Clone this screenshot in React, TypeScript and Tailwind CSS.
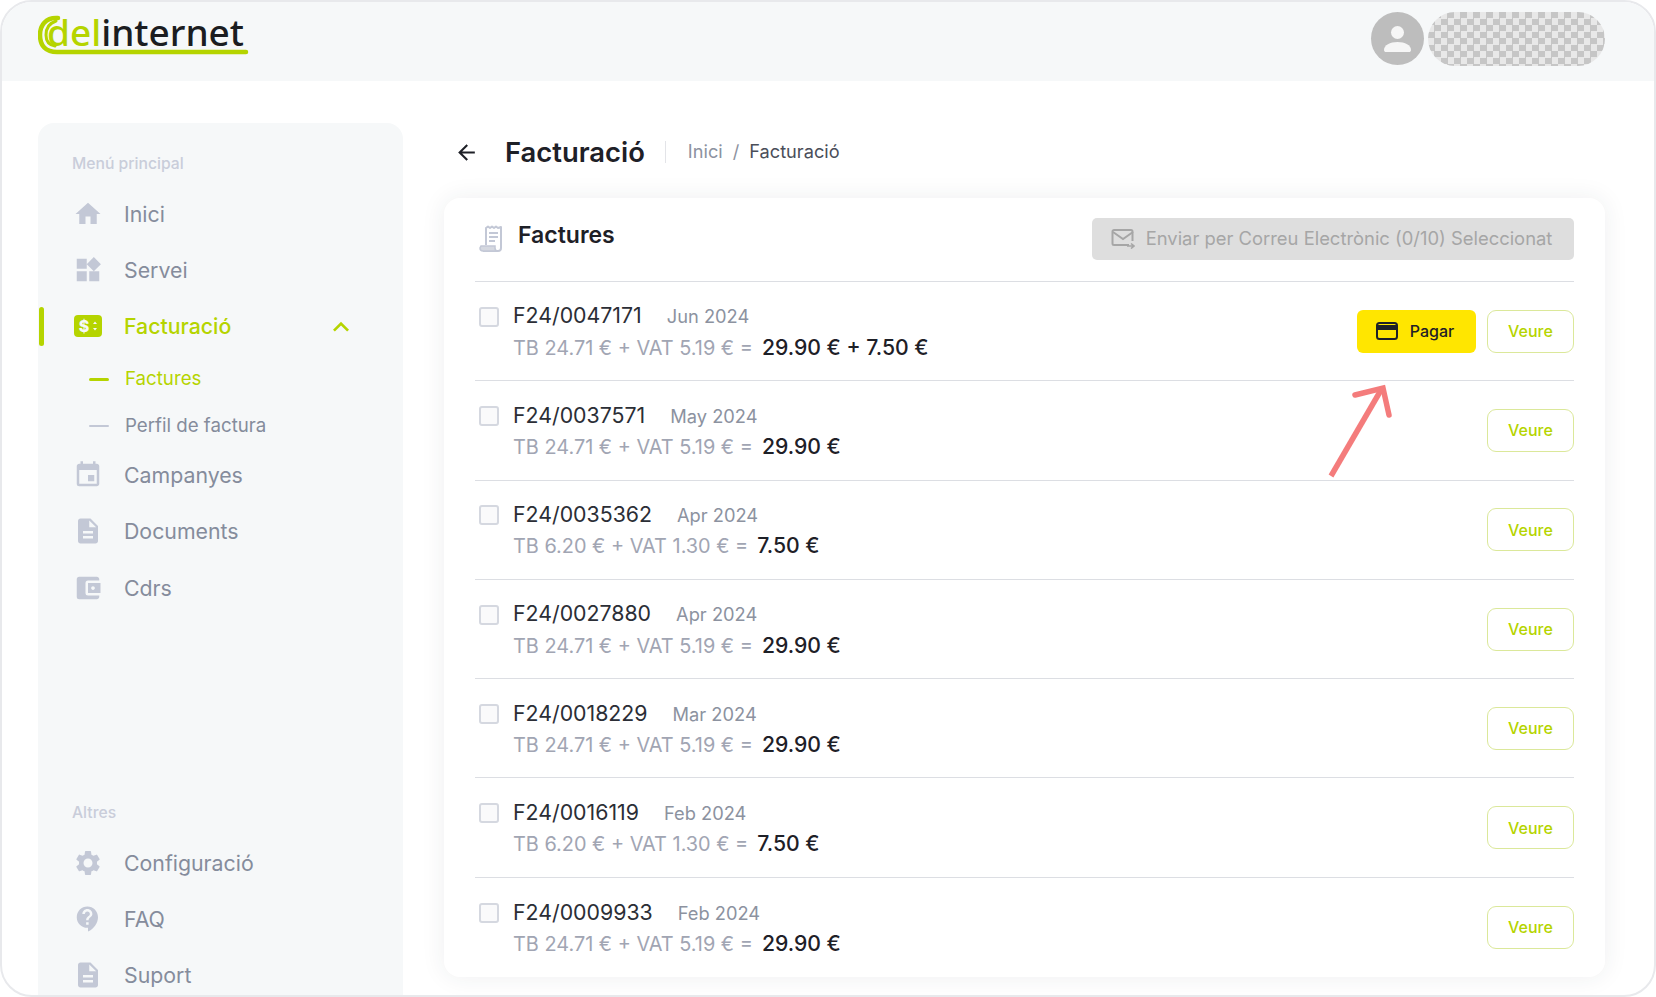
import React from 'react';
import { MdHome, MdWidgets, MdEvent, MdDescription, MdAccountBalanceWallet, MdSettings, MdContactSupport, MdKeyboardArrowUp, MdArrowBack } from 'react-icons/md';

const INVOICES = [
  { id: 'F24/0047171', date: 'Jun 2024', base: 'TB 24.71 € + VAT 5.19 € =', total: '29.90 € + 7.50 €', pay: true },
  { id: 'F24/0037571', date: 'May 2024', base: 'TB 24.71 € + VAT 5.19 € =', total: '29.90 €', pay: false },
  { id: 'F24/0035362', date: 'Apr 2024', base: 'TB 6.20 € + VAT 1.30 € =', total: '7.50 €', pay: false },
  { id: 'F24/0027880', date: 'Apr 2024', base: 'TB 24.71 € + VAT 5.19 € =', total: '29.90 €', pay: false },
  { id: 'F24/0018229', date: 'Mar 2024', base: 'TB 24.71 € + VAT 5.19 € =', total: '29.90 €', pay: false },
  { id: 'F24/0016119', date: 'Feb 2024', base: 'TB 6.20 € + VAT 1.30 € =', total: '7.50 €', pay: false },
  { id: 'F24/0009933', date: 'Feb 2024', base: 'TB 24.71 € + VAT 5.19 € =', total: '29.90 €', pay: false },
];

function Logo() {
  return (
    <div className="relative w-[212px] h-[44px]">
      <svg className="absolute left-0 top-0" width="212" height="44" viewBox="0 0 212 44" fill="none">
        <path d="M20 3H18C8 3 2 10 2 20C2 31 8 37 19 37H208" stroke="#b5d400" strokeWidth="4.5" strokeLinecap="round" />
        <path d="M18 6C12 8 8 13 8 20C8 26 11 30 17 31" stroke="#b5d400" strokeWidth="3" strokeLinecap="round" />
      </svg>
      <span className="absolute left-[9px] top-[-8px] text-[37px] leading-[50px] font-medium whitespace-nowrap font-['Noto_Sans',sans-serif]">
        <span className="text-[#b5d400]">del</span>
        <span className="text-[#1b1d21]">internet</span>
      </span>
    </div>
  );
}

function BillingIcon() {
  return (
    <svg width="30" height="24" viewBox="0 0 30 24">
      <rect x="1" y="1" width="28" height="22" rx="4" fill="#b5d400" />
      <text x="11" y="18" textAnchor="middle" fontSize="16" fontWeight="800" fill="#f6f8f9" fontFamily="Inter, sans-serif">$</text>
      <path d="M20 10l2-2.5 2 2.5zM20 14h4l-2 2.5z" fill="#f6f8f9" />
    </svg>
  );
}

function NavItem({ icon, label, className }: { icon: React.ReactNode; label: string; className: string }) {
  return (
    <div className={`flex items-center pl-[35px] ${className}`}>
      <span className="w-[30px] flex justify-center text-[#c3c8d6]">{icon}</span>
      <span className="ml-[21px] text-[21.3px] leading-[30px] text-[#858c9c]">{label}</span>
    </div>
  );
}

function Sidebar() {
  return (
    <aside className="relative w-[365px] h-[872px] shrink-0 bg-[#f6f8f9] rounded-t-[16px] overflow-hidden">
      <p className="pt-[31px] pl-[34px] text-[15.7px] leading-[20px] font-medium text-[#c9cdda]">Menú principal</p>
      <NavItem className="mt-[24px]" icon={<MdHome size={32} />} label="Inici" />
      <NavItem className="mt-[24px]" icon={<MdWidgets size={32} />} label="Servei" />

      <div className="relative mt-[25px] flex items-center pl-[35px] h-[30px]">
        <span className="absolute left-[1px] top-[-4px] w-[5px] h-[39px] rounded-[3px] bg-[#b5d400]" />
        <BillingIcon />
        <span className="ml-[21px] text-[21.3px] leading-[30px] font-medium text-[#b5d400]">Facturació</span>
        <MdKeyboardArrowUp size={32} className="absolute left-[287px] top-0 text-[#b5d400]" />
      </div>
      <div className="mt-[26px] flex items-center pl-[51px] h-[24px]">
        <span className="w-[20px] h-[3px] rounded-sm bg-[#b5d400]" />
        <span className="ml-[16px] text-[18.7px] leading-[24px] text-[#b5d400]">Factures</span>
      </div>
      <div className="mt-[23px] flex items-center pl-[51px] h-[24px]">
        <span className="w-[20px] h-[2px] rounded-sm bg-[#c3c8d6]" />
        <span className="ml-[16px] text-[18.7px] leading-[24px] text-[#858c9c]">Perfil de factura</span>
      </div>
      <NavItem className="mt-[21px]" icon={<MdEvent size={32} />} label="Campanyes" />
      <NavItem className="mt-[24px]" icon={<MdDescription size={32} />} label="Documents" />
      <NavItem className="mt-[25px]" icon={<MdAccountBalanceWallet size={32} />} label="Cdrs" />

      <p className="mt-[199px] pl-[34px] text-[15.7px] leading-[20px] font-medium text-[#c9cdda]">Altres</p>
      <NavItem className="mt-[24px]" icon={<MdSettings size={32} />} label="Configuració" />
      <NavItem className="mt-[24px]" icon={<MdContactSupport size={32} />} label="FAQ" />
      <NavItem className="mt-[24px]" icon={<MdDescription size={32} />} label="Suport" />
    </aside>
  );
}

function InvoiceRow({ inv, last }: { inv: (typeof INVOICES)[number]; last: boolean }) {
  return (
    <div className={`flex items-center h-[99.3px] ${last ? '' : 'border-b border-[#dcdee3]'}`}>
      <span className="mt-[-29px] ml-[4px] w-[20px] h-[20px] rounded-[3px] border-2 border-[#d5d8e0] bg-[#fafafb]" />
      <div className="ml-[14px] flex-1 mt-[1px]">
        <div className="flex items-baseline">
          <span className="text-[21.3px] leading-[30px] text-[#2b2e36]">{inv.id}</span>
          <span className="ml-[25px] text-[18.3px] text-[#8c92a0]">{inv.date}</span>
        </div>
        <div className="flex items-baseline mt-[1px]">
          <span className="text-[19.9px] leading-[30px] text-[#a1a5b3]">{inv.base}</span>
          <span className="ml-[9px] text-[21.2px] leading-[30px] font-medium text-[#1e2027]">{inv.total}</span>
        </div>
      </div>
      {inv.pay && (
        <button className="flex items-center justify-center w-[119px] h-[43px] mr-[11px] rounded-[6px] bg-[#ffe600] text-[16px] font-medium text-[#1e2027]">
          <svg width="22" height="18" viewBox="0 0 22 18" fill="none" className="mr-[12px] ml-[-3px]">
            <rect x="1" y="1" width="20" height="16" rx="2.5" stroke="#1e2027" strokeWidth="2" />
            <rect x="1" y="3" width="20" height="5" fill="#1e2027" />
          </svg>
          Pagar
        </button>
      )}
      <button className="w-[87px] h-[43px] rounded-[9px] border border-[#dbe89a] bg-white text-[16px] font-medium text-[#b5d400]">Veure</button>
    </div>
  );
}

export default function App() {
  return (
    <div className="w-[1656px] h-[997px] bg-white overflow-hidden font-['Inter',sans-serif]">
      <div className="relative w-[1656px] h-[997px] rounded-[32px] border-2 border-[#e8e9ec] overflow-hidden bg-white">
        <header className="flex items-center justify-between h-[79px] bg-[#f6f8f9] pl-[36px] pr-[49px]">
          <div className="mt-[-10px]">
            <Logo />
          </div>
          <div className="flex items-center gap-[4px] mt-[-6px]">
            <span className="block w-[53px] h-[53px] rounded-full bg-[#bdbdbd] overflow-hidden">
              <svg width="53" height="53" viewBox="0 0 53 53" fill="#f6f6f6">
                <circle cx="26.5" cy="20.5" r="6.5" />
                <path d="M13 38c0-5 6-8 13.5-8S40 33 40 38c0 1.500-1 2-2 2H15c-1 0-2-.5-2-2z" />
              </svg>
            </span>
            <span className="w-[177px] h-[54px] rounded-full bg-[repeating-conic-gradient(#c6c6c6_0%_25%,#e8e8e8_0%_50%)] bg-[length:13px_13px]" />
          </div>
        </header>

        <div className="flex pt-[42px] pl-[36px] pr-[49px]">
          <Sidebar />
          <main className="ml-[41px] flex-1">
            <div className="flex items-center h-[50px] mt-[4px]">
              <MdArrowBack size={25} className="ml-[10px] text-[#1e2027]" />
              <h1 className="ml-[26px] text-[27.4px] leading-[36px] font-semibold text-[#1e2027]">Facturació</h1>
              <span className="ml-[20px] w-px h-[22px] bg-[#e3e4e8]" />
              <span className="ml-[22px] text-[18.2px] text-[#8c92a0]">Inici</span>
              <span className="mx-[10px] text-[18.2px] text-[#8c92a0]">/</span>
              <span className="text-[18.2px] text-[#4a4e59]">Facturació</span>
            </div>
            <section className="mt-[21px] h-[779px] bg-white rounded-[16px] px-[31px] shadow-[0_0_24px_rgba(40,50,70,0.08)]">
              <div className="flex items-center justify-between h-[84px] border-b border-[#dcdee3]">
                <div className="flex items-center mt-[-10px]">
                  <svg width="26" height="28" viewBox="0 0 26 28" fill="none" className="ml-[4px] mt-[8px]">
                    <path d="M7 20V3l2-1.500L11 3l2-1.500L15 3l2-1.500L19 3l3-1v21a3 3 0 0 1-3 3H4" stroke="#c3c8d6" strokeWidth="2" strokeLinejoin="round" />
                    <path d="M2 21h14v2a3 3 0 0 0 3 3H4a3 3 0 0 1-3-3z" fill="#d5d8e0" stroke="#c3c8d6" strokeWidth="1.5" />
                    <path d="M10 8h9M10 12h9M10 16h6" stroke="#c3c8d6" strokeWidth="2" />
                  </svg>
                  <h2 className="ml-[13px] text-[23px] leading-[30px] font-semibold text-[#1e2027]">Factures</h2>
                </div>
                <button className="flex items-center justify-center w-[482px] h-[42px] mt-[-1px] pr-[3px] rounded-[5px] bg-[#dedede] text-[18.4px] text-[#a6a6a6]">
                  <svg width="24" height="20" viewBox="0 0 24 20" fill="none" className="mr-[11px]" stroke="#a6a6a6" strokeWidth="2">
                    <path d="M18 16H3a1.500 1.500 0 0 1-1.500-1.500v-12A1.500 1.500 0 0 1 3 1h17a1.500 1.500 0 0 1 1.500 1.500V12" />
                    <path d="M2 3l10 7 10-7" />
                    <path d="M16 17h7M20 14.500l3 2.500-3 2.500" strokeWidth="1.6" />
                  </svg>
                  Enviar per Correu Electrònic (0/10) Seleccionat
                </button>
              </div>
              {INVOICES.map((inv, i) => (
                <InvoiceRow key={inv.id} inv={inv} last={i === INVOICES.length - 1} />
              ))}
            </section>
          </main>
        </div>

        {/* red annotation arrow over the list */}
        <svg className="absolute left-[1323px] top-[381px]" width="72" height="100" viewBox="0 0 72 100" fill="none" stroke="#f47c7c" strokeWidth="5.5" strokeLinecap="round">
          <path d="M6 93L56 7" strokeLinecap="butt" />
          <path d="M30 12L58 5L64 32" />
        </svg>
      </div>
    </div>
  );
}
